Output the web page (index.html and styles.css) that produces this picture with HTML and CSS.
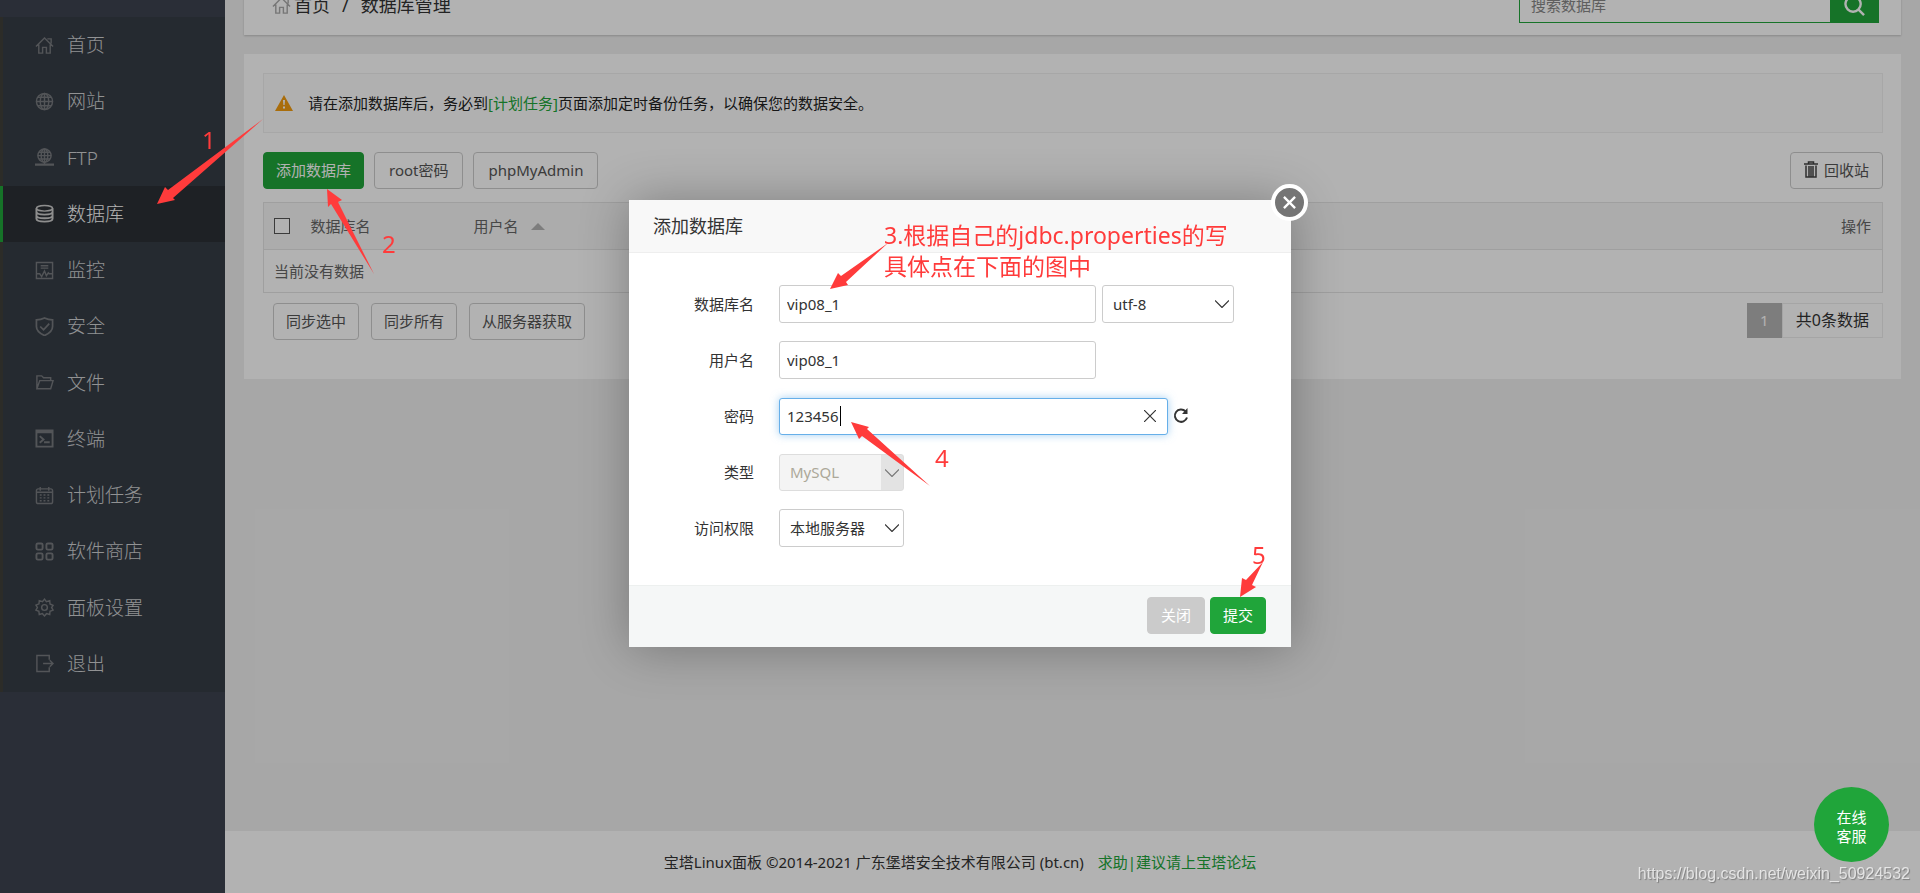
FILE: index.html
```html
<!DOCTYPE html>
<html lang="zh-CN">
<head>
<meta charset="utf-8">
<title>数据库管理</title>
<link rel="stylesheet" href="styles.css">
</head>
<body>
<div class="app">
  <aside class="sidebar">
    <nav class="menu">
      <a class="item" href="#"><svg class="ico" viewBox="0 0 20 20"><path d="M1 11 10 2l9 9M13 3h4v5M4 9v9h4v-6h4v6h4V9"/></svg>首页</a>
      <a class="item" href="#"><svg class="ico" viewBox="0 0 20 20"><circle cx="10" cy="10" r="8.5"/><ellipse cx="10" cy="10" rx="4.5" ry="8.5"/><path d="M10 1.500v17M1.500 10h17M3 5.500h14M3 14.500h14"/></svg>网站</a>
      <a class="item" href="#"><svg class="ico" viewBox="0 0 20 20"><circle cx="10" cy="8" r="7"/><ellipse cx="10" cy="8" rx="3.500" ry="7"/><path d="M10 1v16M3 8h14M4 4.500h12M4 11.500h12"/><path d="M0 17.500h20M7 17.500h6" stroke-width="2.500"/></svg>FTP</a>
      <a class="item active" href="#"><svg class="ico" viewBox="0 0 20 20"><ellipse cx="10" cy="4.500" rx="8.500" ry="3"/><path d="M1.500 4.500v11c0 4 17 4 17 0v-11M1.500 8.200c0 4 17 4 17 0M1.500 12c0 4 17 4 17 0" stroke-width="2"/></svg>数据库</a>
      <a class="item" href="#"><svg class="ico" viewBox="0 0 20 20"><path d="M1.500 1.500h17v17h-17zM6 5h8M6 7.500h8M2 13.500h3l2 3 3-6 2 5 2-3 1 1h3"/></svg>监控</a>
      <a class="item" href="#"><svg class="ico" viewBox="0 0 20 20"><path d="M10 1C7 2.500 4 3 1.500 3v7c0 5 4 7.500 8.500 9.500 4.500-2 8.500-4.500 8.500-9.500V3C16 3 13 2.500 10 1zM5.500 10l3.500 3.500 6-6.500" stroke-width="1.800"/></svg>安全</a>
      <a class="item" href="#"><svg class="ico" viewBox="0 0 20 20"><path d="M2 16.500V3h5l2 2h7.500v3M2 16.500h14.500L19 8H5z"/></svg>文件</a>
      <a class="item" href="#"><svg class="ico" viewBox="0 0 20 20"><path d="M1.500 1.500h17v17h-17zM1.500 3.500h17M5 7.500l4 3.500-4 3.500M9.500 14h6" stroke-width="2"/></svg>终端</a>
      <a class="item" href="#"><svg class="ico" viewBox="0 0 20 20"><rect x="1.500" y="3" width="17" height="15.500" rx="2"/><path d="M5.500 1v4M14.500 1v4M1.500 6.500h17"/><path d="M5 9.500h10M5 12.500h10M5 15.500h10" stroke-dasharray="2 2"/></svg>计划任务</a>
      <a class="item" href="#"><svg class="ico bold" viewBox="0 0 20 20"><rect x="1.500" y="1.500" width="6.500" height="6.500" rx="1.500"/><rect x="12" y="1.500" width="6.500" height="6.500" rx="1.500"/><rect x="1.500" y="12" width="6.500" height="6.500" rx="1.500"/><rect x="12" y="12" width="6.500" height="6.500" rx="1.500"/></svg>软件商店</a>
      <a class="item" href="#"><svg class="ico" viewBox="0 0 20 20"><path d="m10 1.200 2 2.600 3.500-1 .3 3.500 3.200 1.500-1.500 2.200 1.500 2.700-3.200 1.300-.3 3.400-3.400-.9-2.100 2.400-2.200-2.400-3.300.9-.4-3.400L1 12.700 2.500 10 1 7.500l3.200-1.400.3-3.300 3.400 1z"/><circle cx="10" cy="10" r="3"/></svg>面板设置</a>
      <a class="item" href="#"><svg class="ico" viewBox="0 0 20 20"><path d="M15 6V1.500H2v17h13V14M8.500 10H19M15.500 6.500 19 10l-3.500 3.500"/></svg>退出</a>
    </nav>
  </aside>
  <main class="main">
    <header class="topbar">
      <div class="crumbs">
        <svg class="ico crumb-ico" viewBox="0 0 20 20"><path d="M1 11 10 2l9 9M13 3h4v5M4 9v9h4v-6h4v6h4V9"/></svg>
        <a href="#">首页</a><span class="sep">/</span><span>数据库管理</span>
      </div>
      <form class="search">
        <input type="text" placeholder="搜索数据库" aria-label="搜索数据库">
        <button type="button" aria-label="搜索"><svg viewBox="0 0 22 22"><circle cx="9.500" cy="9.500" r="8"/><path d="m15 15 6 6"/></svg></button>
      </form>
    </header>
    <section class="card">
      <div class="notice">
        <svg class="warn" viewBox="0 0 18 16"><path d="M9 0 18 16H0z" fill="#f29c11"/><path d="M8 5h2l-.4 5H8.400zM8 11.500h2v2H8z" fill="#fff"/></svg>
        <p>请在添加数据库后，务必到<a href="#">[计划任务]</a>页面添加定时备份任务，以确保您的数据安全。</p>
      </div>
      <div class="tools">
        <button class="btn primary" type="button">添加数据库</button>
        <button class="btn" type="button">root密码</button>
        <button class="btn" type="button">phpMyAdmin</button>
        <button class="btn recycle" type="button"><svg viewBox="0 0 14 17"><path d="M0 3h14M4.500 2.500V1h5v1.500M2 4.500V16h10V4.500M5 5v10.500M7 5v10.500M9 5v10.500"/></svg>回收站</button>
      </div>
      <table class="grid">
        <thead><tr><th class="c-check"><input type="checkbox" aria-label="全选"></th><th class="c-name">数据库名</th><th>用户名<svg class="sort" viewBox="0 0 14 7"><path d="M7 0l7 7H0z"/></svg></th><th class="c-op">操作</th></tr></thead>
        <tbody><tr><td colspan="4">当前没有数据</td></tr></tbody>
      </table>
      <div class="foot">
        <button class="btn" type="button">同步选中</button>
        <button class="btn" type="button">同步所有</button>
        <button class="btn" type="button">从服务器获取</button>
        <div class="pager"><span class="page">1</span><span class="total">共0条数据</span></div>
      </div>
    </section>
    <footer class="footer"><span>宝塔Linux面板 ©2014-2021 广东堡塔安全技术有限公司 (bt.cn)</span><a href="#">求助|建议请上宝塔论坛</a></footer>
  </main>
</div>

<div class="shade">
  <div class="dialog" role="dialog" aria-labelledby="dlg-title">
    <h2 class="dlg-head" id="dlg-title">添加数据库</h2>
    <button class="dlg-close" type="button" aria-label="关闭窗口"><svg viewBox="0 0 14 14"><path d="m1 1 12 12M13 1 1 13"/></svg></button>
    <form class="dlg-body">
      <div class="row"><label for="db">数据库名</label><input class="text" id="db" type="text" value="vip08_1">
        <div class="pick wide"><select aria-label="编码"><option>utf-8</option></select><svg viewBox="0 0 14 8"><path d="m0 .5 7 7 7-7"/></svg></div></div>
      <div class="row"><label for="user">用户名</label><input class="text" id="user" type="text" value="vip08_1"></div>
      <div class="row"><label for="pwd">密码</label>
        <div class="pwd"><input class="text focus" id="pwd" type="text" value="123456"><i class="caret"></i><svg class="clear" viewBox="0 0 12 12"><path d="m0 0 12 12M12 0 0 12"/></svg></div>
        <button class="refresh" type="button" aria-label="随机密码"><svg viewBox="0 0 16 16"><path d="M12.500 3.300A6.200 6.200 0 1 0 14 9.500" fill="none" stroke="#333" stroke-width="2"/><path d="M14.500 0v6H9z" fill="#333"/></svg></button></div>
      <div class="row"><label for="kind">类型</label><div class="pick off"><select id="kind" disabled><option>MySQL</option></select><svg viewBox="0 0 14 8"><path d="m0 .5 7 7 7-7"/></svg></div></div>
      <div class="row"><label for="access">访问权限</label><div class="pick"><select id="access"><option>本地服务器</option></select><svg viewBox="0 0 14 8"><path d="m0 .5 7 7 7-7"/></svg></div></div>
    </form>
    <div class="dlg-foot"><button class="btn cancel" type="button">关闭</button><button class="btn submit" type="button">提交</button></div>
  </div>
</div>

<button class="service" type="button">在线<br>客服</button>

<div class="notes">
  <svg class="arrows" width="1920" height="893" viewBox="0 0 1920 893">
    <path d="M157 204 165 187 168 190 263 119 173 198 175 200z"/>
    <path d="M327 189 342 200 338 202 374 274 331 204 328 207z"/>
    <path d="M830 289 838 273 841 276 888 243 846 282 848 285z"/>
    <path d="M851 422 869 427 867 429 930 486 862 436 859 439z"/>
    <path d="M1240 597 1242 578 1246 580 1263 562 1252 585 1256 587z"/>
  </svg>
  <span class="num n1">1</span>
  <span class="num n2">2</span>
  <p class="num n3">3.根据自己的jdbc.properties的写<br>具体点在下面的图中</p>
  <span class="num n4">4</span>
  <span class="num n5">5</span>
  <span class="mark">https://blog.csdn.net/weixin_50924532</span>
</div>
</body>
</html>
```

FILE: styles.css
```css
* { box-sizing: border-box; }
body { margin: 0; overflow: hidden; background: #f0f0f0; color: #333; font: 15px/22px "Noto Sans", "Noto Sans CJK SC", sans-serif; }
button, input, select { font: inherit; color: inherit; }
button { cursor: pointer; }
a { color: #20a53a; text-decoration: none; }
p, h2 { margin: 0; }

.app { display: flex; height: 100vh; }
.sidebar { width: 225px; padding-top: 17px; background: #3d434f; }
.menu { display: flex; flex-direction: column; min-height: 675px; background: #363d46; }
.item { flex: 1; display: flex; align-items: center; gap: 13px; padding-left: 32px; border-left: 3px solid #403f3a; color: #d0d1d3; font-size: 19px; font-weight: 300; }
.item.active { background: #2c3036; border-left-color: #20a53a; color: #fff; }
.ico { width: 19px; height: 19px; fill: none; stroke: #777a7e; stroke-width: 1.500; }
.ico.bold { stroke-width: 2; }
.active .ico { stroke: #ccc; }

.main { flex: 1; min-width: 0; display: flex; flex-direction: column; }
.topbar { display: flex; align-items: center; justify-content: space-between; height: 60px; margin: -25px 19px 19px; padding: 0 22px 0 28px; background: #fff; box-shadow: 0 1px 2px rgba(0, 0, 0, .2); flex: none; }
.crumbs { display: flex; align-items: center; font-size: 18px; line-height: 20px; }
.crumbs a { color: inherit; }
.crumb-ico { margin-right: 3px; stroke: #aaa; }
.sep { margin: 0 12px; }
.search { display: flex; width: 360px; height: 35px; }
.search input { flex: 1; min-width: 0; padding: 0 11px; border: 1px solid #20a53a; border-right: 0; background: #fff; border-radius: 0; }
.search input::placeholder { color: #888; }
.search button { width: 49px; padding: 0; border: 0; background: #20a53a; }
.search svg { display: block; width: 21px; height: 21px; margin: auto; fill: none; stroke: #fff; stroke-width: 2.500; }

.card { margin: 0 19px; padding: 19px 18px 39px 19px; background: #fff; }
.notice { display: flex; align-items: center; gap: 15px; height: 60px; padding: 0 11px; border: 1px solid #efefef; background: #fdfdfd; }
.notice p { color: #222; }
.warn { width: 18px; height: 16px; }
.tools { display: flex; gap: 10px; margin: 19px 0 13px; }
.btn { height: 37px; padding: 0 12px 2px; border: 1px solid #ccc; border-radius: 4px; background: #fff; color: #555; white-space: nowrap; }
.tools .btn { padding: 0 14px 2px; }
.tools .primary { padding: 0 12px 2px; }
.btn.primary, .btn.submit { border-color: #20a53a; background: #20a53a; color: #fff; }
.tools .recycle { display: flex; align-items: center; gap: 6px; margin-left: auto; padding: 0 13px 2px; }
.recycle svg { width: 14px; height: 17px; fill: none; stroke: #444; stroke-width: 1.500; }

.grid { width: 100%; border: 1px solid #e4e4e4; border-collapse: collapse; color: #666; table-layout: fixed; }
.grid th { height: 47px; padding: 0; background: #f6f6f6; border-bottom: 1px solid #e4e4e4; font-weight: 400; text-align: left; }
.grid td { height: 43px; padding: 0 10px; }
.grid .c-check { width: 47px; padding-left: 10px; }
.grid .c-name { width: 163px; }
.grid .c-op { padding-right: 11px; text-align: right; }
.grid input { display: block; appearance: none; width: 16px; height: 16px; margin: 0; border: 1px solid #555; background: #fff; }
.sort { width: 14px; height: 7px; margin: 0 0 2px 12px; fill: #b4b4b4; }
.foot { display: flex; gap: 12px; padding: 10px 0 0 10px; }
.pager { display: flex; height: 35px; margin-left: auto; line-height: 33px; font-size: 16px; color: #333; }
.page { width: 35px; text-align: center; background: #b4b4b4; color: #fff; line-height: 35px; font-size: 15px; }
.total { padding: 0 13px; border: 1px solid #ececec; }
.footer { display: flex; align-items: center; justify-content: center; gap: 14px; height: 62px; margin-top: auto; padding-right: 225px; background: #fff; }

.shade { position: absolute; inset: 0; display: flex; align-items: flex-start; justify-content: center; padding-top: 200px; background: rgba(0, 0, 0, .3); }
.dialog { position: relative; width: 662px; border-radius: 2px; background: #fff; box-shadow: 1px 1px 50px rgba(0, 0, 0, .3); }
.dlg-head { padding: 0 24px; border-bottom: 1px solid #eee; background: #f8f8f8; font-size: 18px; font-weight: 400; line-height: 52px; }
.dlg-close { position: absolute; top: -16px; right: -17px; width: 37px; height: 37px; padding: 0; border: 4px solid #fff; border-radius: 50%; background: #757575; }
.dlg-close svg { display: block; width: 13px; height: 13px; margin: auto; stroke: #fff; stroke-width: 2.500; }
.dlg-body { display: flex; flex-direction: column; gap: 18px; padding: 32px 0 38px; }
.row { display: flex; align-items: center; height: 38px; }
.row label { width: 125px; margin-right: 25px; text-align: right; }
.text { width: 317px; height: 38px; padding: 0 7px; border: 1px solid #ccc; border-radius: 3px; background: #fff; outline: 0; }
.pick { position: relative; width: 125px; }
.pick.wide { width: 132px; margin-left: 6px; }
.pick select { display: block; appearance: none; width: 100%; height: 38px; padding: 0 10px; border: 1px solid #ccc; border-radius: 3px; background: #fff; }
.pick svg { position: absolute; right: 5px; top: 15px; width: 14px; height: 8px; fill: none; stroke: #333; stroke-width: 1.200; }
.pick.off select { height: 37px; border-color: #ddd; color: #aca899; background: linear-gradient(to left, #e3e3e3 22px, #f4f4f4 22px); opacity: 1; }
.pick.off svg { stroke: #777; }
.pwd { position: relative; width: 389px; }
.pwd .text { display: block; width: 100%; }
.text.focus { height: 37px; border-color: #66afe9; box-shadow: 0 0 8px rgba(102, 175, 233, .6); }
.caret { position: absolute; left: 61px; top: 8px; width: 1px; height: 20px; background: #000; }
.clear { position: absolute; right: 12px; top: 12px; width: 12px; height: 12px; stroke: #333; stroke-width: 1.200; }
.refresh { width: 16px; height: 16px; margin-left: 5px; padding: 0; border: 0; background: none; }
.refresh svg { display: block; }
.dlg-foot { display: flex; justify-content: flex-end; gap: 5px; padding: 11px 25px 13px; border-top: 1px solid #edf0ef; background: #f5f7f7; }
.dlg-foot .btn { padding: 0 13px 2px; }
.dlg-foot .submit { padding: 0 12px 2px; }
.btn.cancel { border-color: #cbcbcb; background: #cbcbcb; color: #fff; }

.service { position: fixed; right: 31px; bottom: 31px; width: 75px; height: 75px; padding: 5px 0 0; border: 0; border-radius: 50%; background: #20a53a; color: #fff; line-height: 19px; }

.notes { position: absolute; inset: 0; overflow: hidden; pointer-events: none; }
.arrows { position: absolute; left: 0; top: 0; fill: #ff3b3b; }
.num { position: absolute; color: #ff3b3b; font-size: 24px; line-height: 31px; white-space: nowrap; }
.n1 { left: 202px; top: 124px; }
.n2 { left: 382px; top: 228px; }
.n3 { left: 884px; top: 220px; font-size: 23px; }
.n4 { left: 935px; top: 442px; }
.n5 { left: 1252px; top: 539px; }
.mark { position: absolute; right: 10px; bottom: 9px; color: rgba(255, 255, 255, .7); font: 16px/20px "Liberation Sans", sans-serif; text-shadow: 1px 1px 1px rgba(0, 0, 0, .3); }
```
